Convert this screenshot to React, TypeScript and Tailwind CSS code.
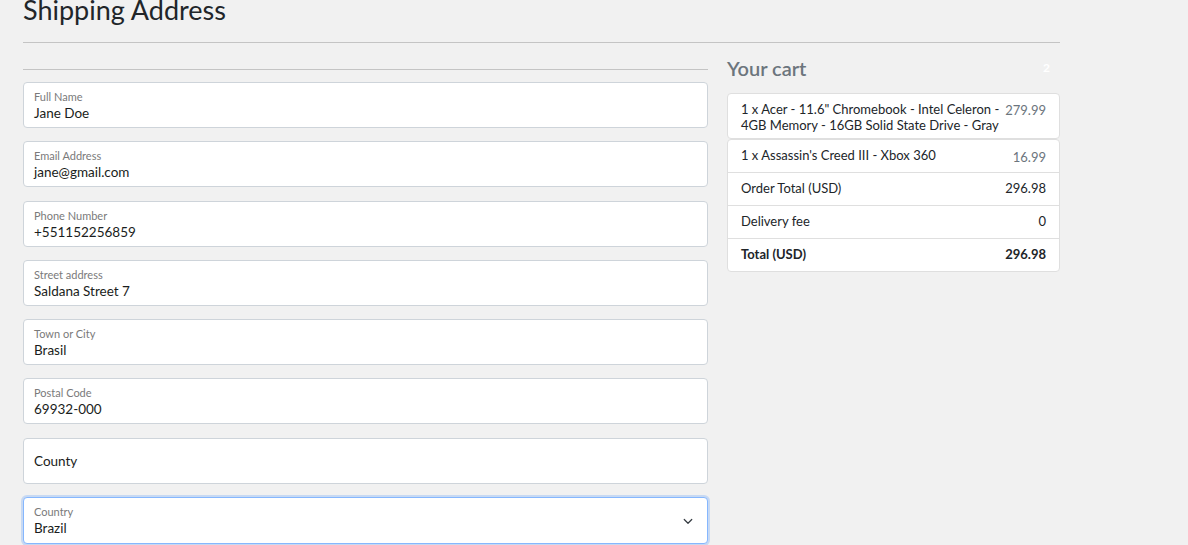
import React from 'react';

const fields = [
  { label: 'Full Name', value: 'Jane Doe' },
  { label: 'Email Address', value: 'jane@gmail.com' },
  { label: 'Phone Number', value: '+551152256859' },
  { label: 'Street address', value: 'Saldana Street 7' },
  { label: 'Town or City', value: 'Brasil' },
  { label: 'Postal Code', value: '69932-000' },
];

const rows = [
  { label: 'Order Total (USD)', value: '296.98' },
  { label: 'Delivery fee', value: '0' },
];

const App: React.FC = () => {
  return (
    <div className="min-h-[545px] bg-[#f1f1f1] text-[#212529] font-['Lato','Liberation_Sans',sans-serif] overflow-hidden">
      <div className="ml-[23px] w-[1037px]">
        <h2 className="h-[31px] -mt-[8px] text-[27px] leading-[36px] font-normal text-[#212529]">Shipping Address</h2>
        <div className="mt-[19px] border-t border-[#c4c4c4]" />

        <div className="flex gap-[19px] mt-[12px]">
          <div className="w-[685px]">
            <div className="mt-[14px] border-t border-[#c4c4c4]" />
            <div className="mt-[12px] flex flex-col gap-[13.3px]">
              {fields.map((f) => (
                <div key={f.label} className="h-[46px] bg-white border border-[#ced4da] rounded-[4px] px-[10px] pt-[7px]">
                  <div className="text-[11px] leading-[14px] text-[#7a7a7a]">{f.label}</div>
                  <div className="text-[13.5px] leading-[18px] text-[#1a1d20]">{f.value}</div>
                </div>
              ))}
              <div className="h-[46px] bg-white border border-[#ced4da] rounded-[4px] px-[10px] flex items-center">
                <span className="text-[13.5px] text-[#1a1d20]">County</span>
              </div>
              <div className="h-[47px] bg-white border border-[#86b7fe] rounded-[4px] px-[10px] pt-[7px] shadow-[0_0_0_2px_rgba(13,110,253,0.18)] flex items-start justify-between">
                <div>
                  <div className="text-[11px] leading-[14px] text-[#7a7a7a]">Country</div>
                  <div className="text-[13.5px] leading-[18px] text-[#1a1d20]">Brazil</div>
                </div>
                <svg width="12" height="12" viewBox="0 0 16 16" className="mt-[10px] mr-[3px]">
                  <path d="M3 6l5 5 5-5" fill="none" stroke="#343a40" strokeWidth="1.6" strokeLinecap="round" strokeLinejoin="round" />
                </svg>
              </div>
            </div>
          </div>

          <div className="w-[333px]">
            <div className="flex items-center justify-between h-[26px]">
              <span className="text-[20px] font-semibold text-[#6c757d]">Your cart</span>
              <span className="text-[12px] font-bold text-white mr-[10px]">2</span>
            </div>
            <div className="mt-[12px] h-[46px] bg-white border border-[#dfdfdf] rounded-[4px] px-[13px] pt-[7px] flex justify-between text-[13px]">
              <span className="leading-[16px] w-[265px]">1 x Acer - 11.6" Chromebook - Intel Celeron - 4GB Memory - 16GB Solid State Drive - Gray</span>
              <span className="text-[#6c757d] leading-[16px] mt-[1px]">279.99</span>
            </div>
            <div className="bg-white border border-[#dfdfdf] rounded-[4px] text-[13px]">
              <div className="h-[33px] px-[13px] flex justify-between border-b border-[#dfdfdf]">
                <span className="mt-[6px]">1 x Assassin's Creed III - Xbox 360</span>
                <span className="mt-[8px] text-[#6c757d]">16.99</span>
              </div>
              {rows.map((r) => (
                <div key={r.label} className="h-[33px] px-[13px] flex items-center justify-between border-b border-[#dfdfdf]">
                  <span>{r.label}</span>
                  <span>{r.value}</span>
                </div>
              ))}
              <div className="h-[32px] px-[13px] flex items-center justify-between font-bold">
                <span>Total (USD)</span>
                <span>296.98</span>
              </div>
            </div>
          </div>
        </div>
      </div>
    </div>
  );
};

export default App;
